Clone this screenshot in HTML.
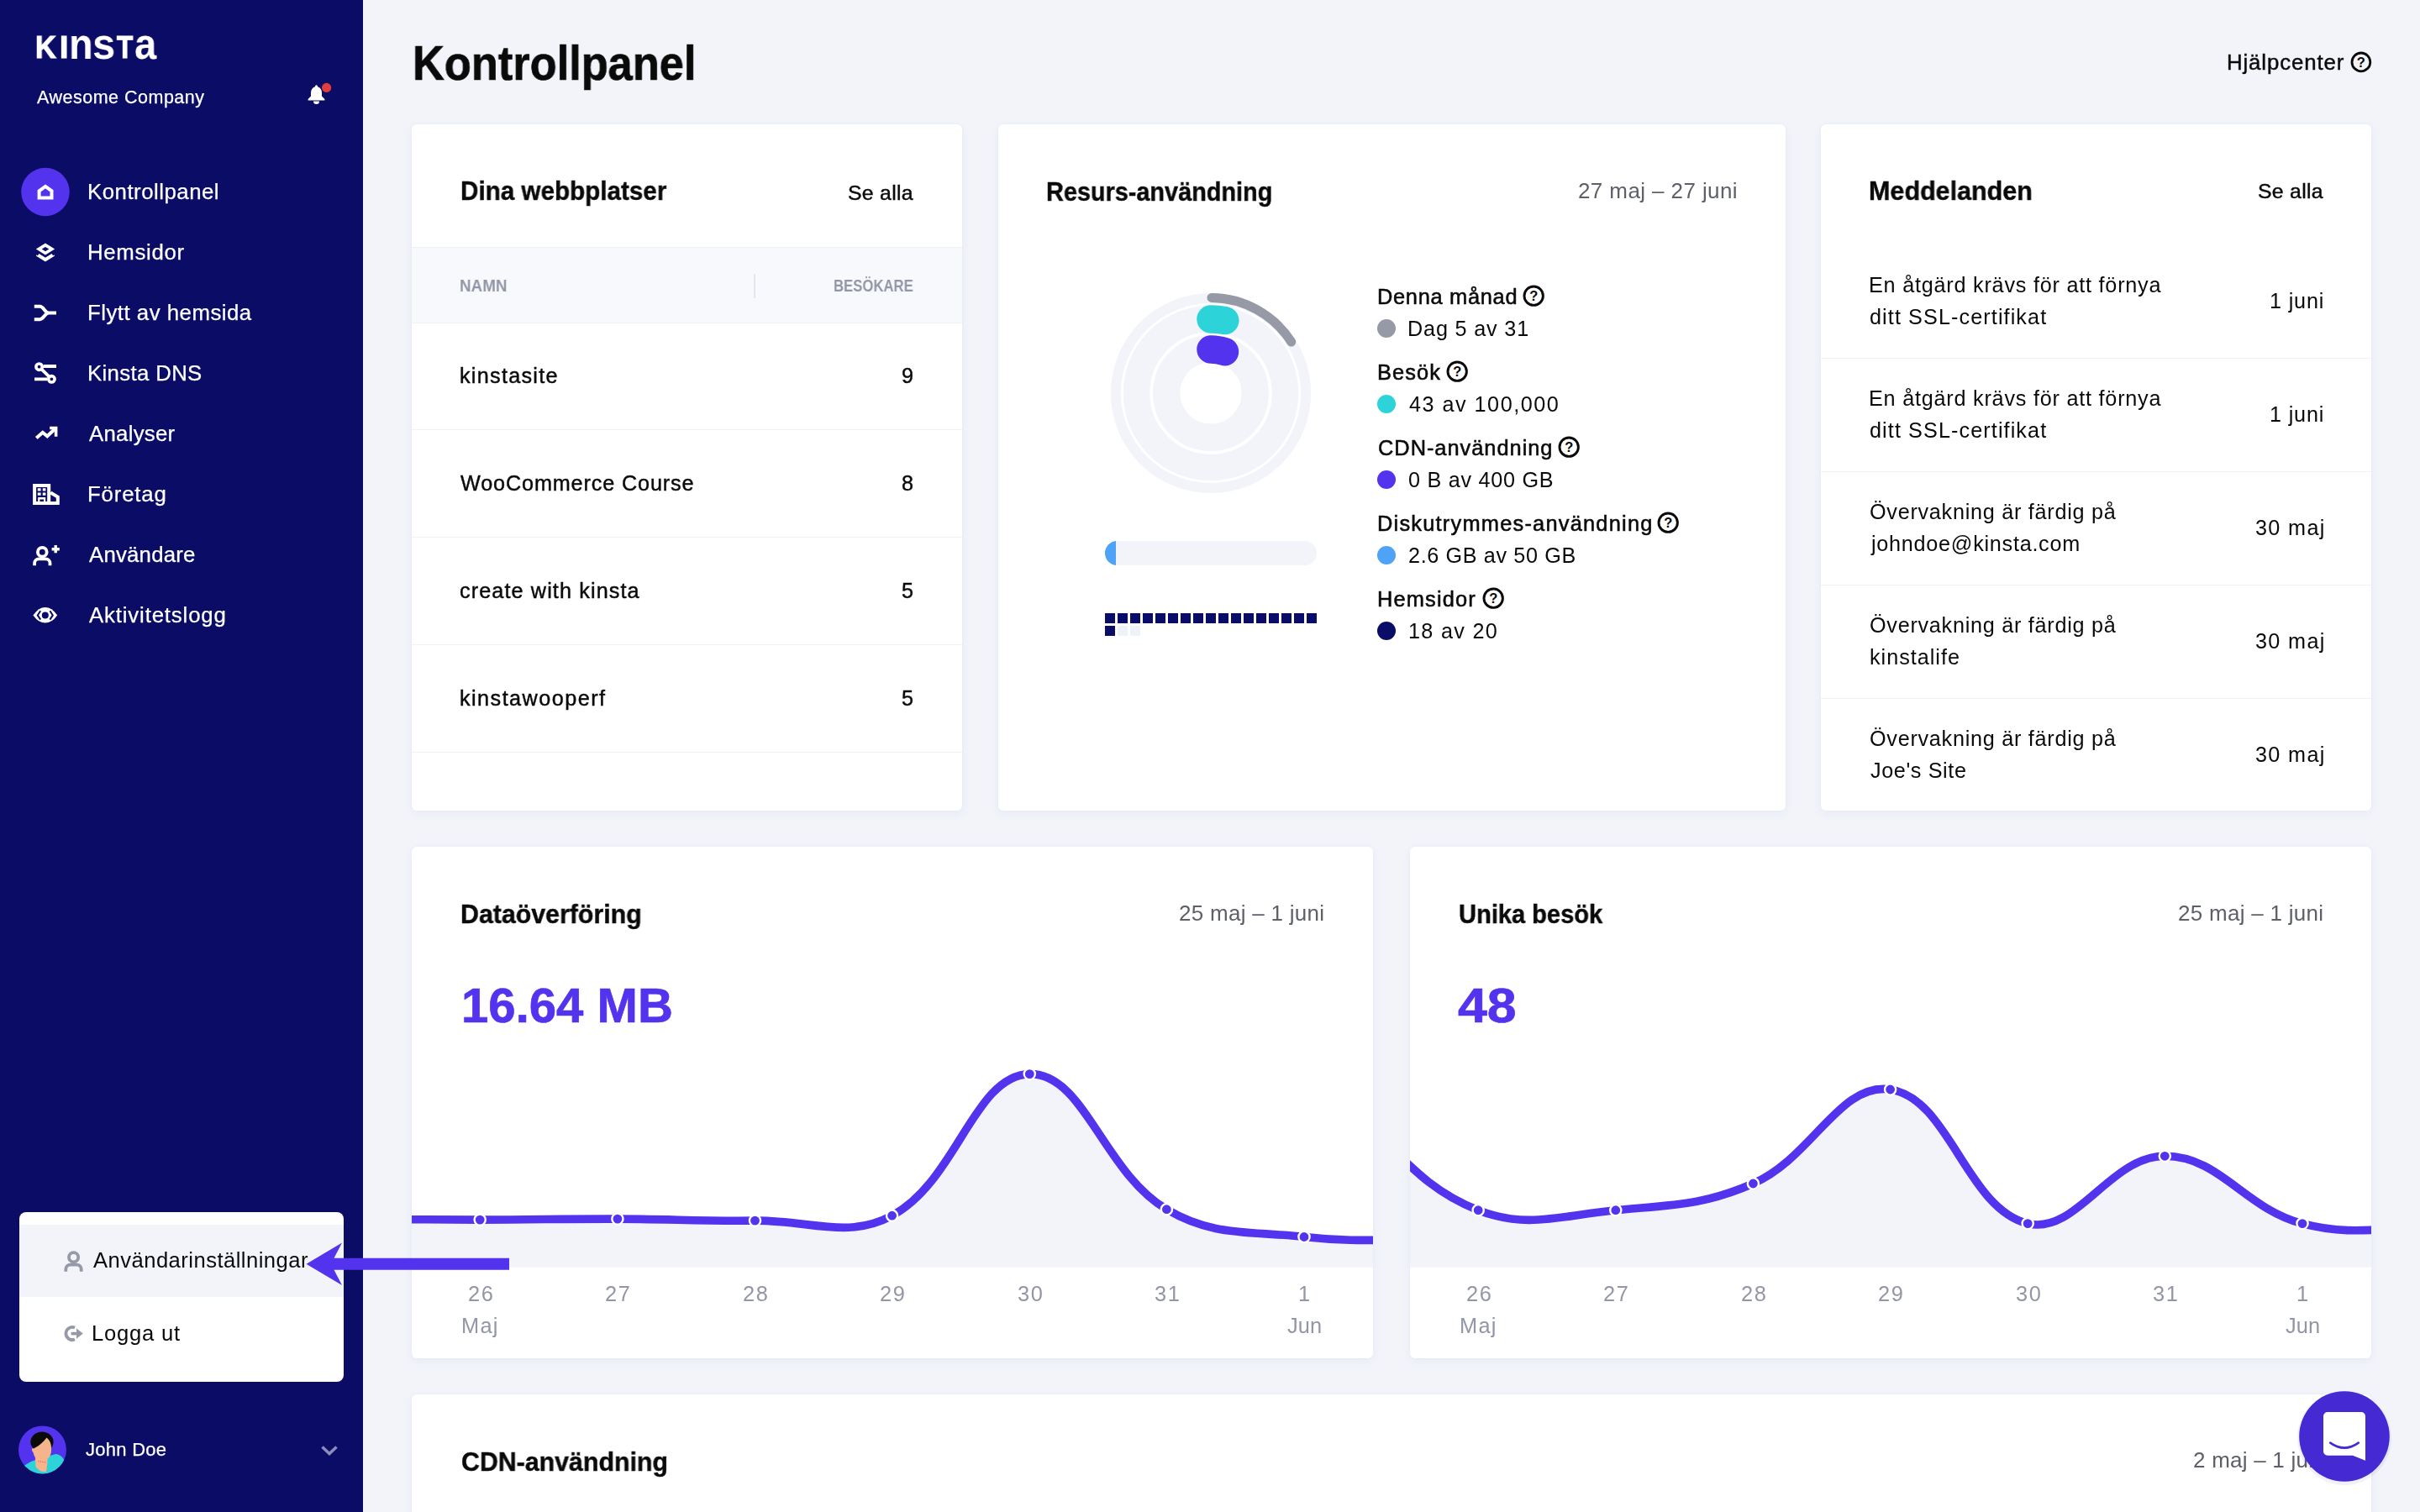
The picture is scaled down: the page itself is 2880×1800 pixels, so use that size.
<!DOCTYPE html>
<html lang="sv">
<head>
<meta charset="utf-8">
<title>Kontrollpanel - MyKinsta</title>
<style>
html,body{margin:0;padding:0;}
body{width:2880px;height:1800px;overflow:hidden;position:relative;background:#f2f4fa;font-family:"Liberation Sans",sans-serif;color:#0a0a0a;}
.t{position:absolute;white-space:nowrap;line-height:1;will-change:transform;}
.card{position:absolute;background:#fff;border-radius:6px;box-shadow:0 3px 12px rgba(40,60,130,0.05),0 0 3px rgba(40,60,130,0.03);overflow:hidden;}
.abs{position:absolute;}
svg{position:absolute;overflow:visible;}
</style>
</head>
<body>
<div class="abs" style="left:0;top:0;width:432px;height:1800px;background:#0a0c66;"></div>
<div class="abs" style="left:0;top:0;width:432px;height:90px;"><span class="t" style="top:38.2px;font-size:37.4px;font-weight:700;color:#ffffff;left:42.04px;transform:scaleX(0.9160);transform-origin:0 0;-webkit-text-stroke:1.2px #fff;">K</span><span class="t" style="top:38.2px;font-size:37.4px;font-weight:700;color:#ffffff;left:70.90px;-webkit-text-stroke:1.2px #fff;">I</span><span class="t" style="top:25.9px;font-size:52px;font-weight:700;color:#ffffff;left:81.66px;transform:scaleX(0.9038);transform-origin:0 0;">n</span><span class="t" style="top:26.3px;font-size:52px;font-weight:700;color:#ffffff;left:110.20px;transform:scaleX(0.9400);transform-origin:0 0;">s</span><span class="t" style="top:38.2px;font-size:37.4px;font-weight:700;color:#ffffff;left:139.05px;transform:scaleX(0.8435);transform-origin:0 0;-webkit-text-stroke:1.2px #fff;">T</span><span class="t" style="top:26.3px;font-size:52px;font-weight:700;color:#ffffff;left:160.06px;transform:scaleX(0.9069);transform-origin:0 0;">a</span></div>
<div class="t" style="top:106.1px;font-size:21.5px;font-weight:400;color:#ffffff;left:44.30px;letter-spacing:0.500px;-webkit-text-stroke:0.25px #fff;">Awesome Company</div>
<div class="t" style="top:215.7px;font-size:25.8px;font-weight:400;color:#ffffff;left:103.80px;letter-spacing:0.500px;-webkit-text-stroke:0.25px #fff;">Kontrollpanel</div>
<div class="t" style="top:287.7px;font-size:25.8px;font-weight:400;color:#ffffff;left:103.80px;letter-spacing:0.686px;-webkit-text-stroke:0.25px #fff;">Hemsidor</div>
<div class="t" style="top:359.7px;font-size:25.8px;font-weight:400;color:#ffffff;left:103.80px;letter-spacing:0.493px;-webkit-text-stroke:0.25px #fff;">Flytt av hemsida</div>
<div class="t" style="top:431.7px;font-size:25.8px;font-weight:400;color:#ffffff;left:103.80px;letter-spacing:0.333px;-webkit-text-stroke:0.25px #fff;">Kinsta DNS</div>
<div class="t" style="top:503.7px;font-size:25.8px;font-weight:400;color:#ffffff;left:105.80px;letter-spacing:0.257px;-webkit-text-stroke:0.25px #fff;">Analyser</div>
<div class="t" style="top:575.7px;font-size:25.8px;font-weight:400;color:#ffffff;left:103.80px;letter-spacing:0.817px;-webkit-text-stroke:0.25px #fff;">Företag</div>
<div class="t" style="top:647.7px;font-size:25.8px;font-weight:400;color:#ffffff;left:105.80px;letter-spacing:0.200px;-webkit-text-stroke:0.25px #fff;">Användare</div>
<div class="t" style="top:719.7px;font-size:25.8px;font-weight:400;color:#ffffff;left:105.80px;letter-spacing:0.838px;-webkit-text-stroke:0.25px #fff;">Aktivitetslogg</div>
<div class="t" style="top:1714.8px;font-size:22px;font-weight:400;color:#ffffff;left:101.60px;letter-spacing:0.271px;-webkit-text-stroke:0.25px #fff;">John Doe</div>
<svg width="432" height="1800" viewBox="0 0 432 1800" style="left:0;top:0" fill="none" stroke="#fff" stroke-width="4"><circle cx="54" cy="228.5" r="28.8" fill="#5333ed" stroke="none"/><path d="M54,221.9 L61.5,227.3 V235.6 H46.6 V227.3 Z" stroke-linejoin="miter"/><path d="M54,289.6 L65.2,296.6 L54,303.6 L42.8,296.6 Z M54,293.9 L49.7,296.6 L54,299.3 L58.3,296.6 Z" fill="#fff" fill-rule="evenodd" stroke="none"/><path d="M43.2,303.2 L54,310 L64.8,303.2 L64.8,304.8 L54,311.6 L43.2,304.8 Z" fill="#fff" stroke="none"/><path d="M45.5,303.4 L54,308.8 L62.5,303.4" stroke-width="3.4" stroke-linecap="butt"/><path d="M40.8,364.8 H47.5 C52,364.8 53.5,372.5 58,372.5 H67 M40.8,380.2 H47.5 C52,380.2 53.5,372.5 58,372.5"/><circle cx="46.6" cy="436.7" r="3.7" stroke-width="3.6"/><circle cx="61.4" cy="451.3" r="3.7" stroke-width="3.6"/><path d="M52,436 H67 M41,451.3 H56 M49.3,439.4 L58.7,448.6" stroke-width="3.8"/><path d="M43.3,521.5 L50.8,514.8 L56.2,519.3 L65,511" stroke-width="4"/><path d="M59.2,509.5 H66.6 V519.7" stroke-width="3.6"/><path d="M41.1,578 H58.2 V599 H41.1 Z M60.2,586.5 L68.8,591.6 V599 H59" stroke-width="4"/><path d="M44.8,581.2 h3.8 v3.2 h-3.8 Z M50.8,581.2 h3.6 v3.2 h-3.6 Z M44.8,586.6 h3.8 v3.2 h-3.8 Z M50.8,586.6 h3.6 v3.2 h-3.6 Z M45.2,592 h9 v6 h-2.2 v-3.6 h-4.6 v3.6 h-2.2 Z" fill="#fff" stroke="none"/><circle cx="50.3" cy="657.2" r="5.4" stroke-width="3.8"/><path d="M41.1,673.2 V670.6 A5.2,5.2 0 0 1 46.3,665.4 H54.3 A5.2,5.2 0 0 1 59.5,670.6 V673.2" stroke-width="3.8"/><path d="M61.6,653.7 H70.8 M66.2,649.1 V658.3" stroke-width="3.4"/><path d="M39.4,732.4 Q46,723 53.8,723 Q61.6,723 68.2,732.4 Q61.6,741.6 53.8,741.6 Q46,741.6 39.4,732.4 Z" fill="#fff" stroke="none"/><circle cx="53.8" cy="732.4" r="4" fill="#0a0c66" stroke="none"/><path d="M48.2,727.2 L44.8,732.4 L48.2,737.6 M59.4,727.2 L62.8,732.4 L59.4,737.6" stroke="#0a0c66" stroke-width="2"/><path d="M376.5,101.2 C377.6,101.2 378,102.4 378.1,103.2 C381.3,104.2 383,107 383,110.2 V114.6 L386.4,118 V119.4 H366.6 V118 L370,114.6 V110.2 C370,107 371.7,104.2 374.9,103.2 C375,102.4 375.4,101.2 376.5,101.2 Z" fill="#fff" stroke="none"/><path d="M373,120.6 H380 A3.5,3.5 0 0 1 373,120.6 Z" fill="#fff" stroke="none"/><circle cx="388.6" cy="104.4" r="5.6" fill="#e03d3d" stroke="none"/><path d="M383.5,1722.5 L392,1730.5 L400.5,1722.5" stroke="#8b8cbd" stroke-width="3.6"/><clipPath id="avc"><circle cx="50.5" cy="1725.9" r="28.5"/></clipPath><g clip-path="url(#avc)" stroke="none"><rect x="20" y="1695" width="62" height="62" fill="#5333ed"/><path d="M27,1746 C34,1741 40,1738 46,1737 L66,1731 C72,1731 76,1736 78,1742 L80,1760 H24 Z" fill="#2cd4d9"/><path d="M41.8,1733 L42.5,1746 C45,1750 50,1753 55,1752 L56.5,1741 L56,1730 Z" fill="#f5b48b"/><ellipse cx="50" cy="1716.6" rx="13.6" ry="12.2" fill="#0a0a0a"/><path d="M40,1724.5 C38,1722.5 37,1726.5 39.5,1729 C41,1736 45,1739 50,1739 C56,1739 60.5,1734.5 61,1727.5 C61.5,1720 60,1715 55.5,1711.5 C52,1716.5 46,1721.5 40,1724.5 Z" fill="#f5b48b"/><path d="M45.5,1739.5 L54.5,1741" stroke="#e03d3d" stroke-width="0.9" stroke-dasharray="1 1.6"/></g></svg>
<div class="abs" style="left:23px;top:1443px;width:386px;height:202px;background:#fff;border-radius:8px;"></div>
<div class="abs" style="left:23px;top:1458px;width:386px;height:86px;background:#f2f4fa;"></div>
<div class="t" style="top:1487.8px;font-size:25.6px;font-weight:400;color:#0a0a0a;left:110.60px;letter-spacing:0.465px;">Användarinställningar</div>
<div class="t" style="top:1575.0px;font-size:25.6px;font-weight:400;color:#0a0a0a;left:108.90px;letter-spacing:0.786px;">Logga ut</div>
<svg width="120" height="140" viewBox="60 1470 120 140" style="left:60px;top:1470px" fill="none" stroke="#9699a8" stroke-width="3.8"><circle cx="87.6" cy="1496.8" r="5.6"/><path d="M78.3,1513.8 V1511 A5.4,5.4 0 0 1 83.7,1505.6 H91.3 A5.4,5.4 0 0 1 96.7,1511 V1513.8"/><path d="M89,1580.6 A7.6,7.6 0 1 0 89,1594.6" stroke-width="3.8"/><path d="M84.6,1587.6 H92" stroke-width="3.6"/><path d="M91,1581.4 L98.8,1587.6 L91,1593.8 Z" fill="#9699a8" stroke="none"/></svg>
<div class="t" style="top:46.7px;font-size:57.2px;font-weight:700;color:#0a0a0a;left:491.33px;transform:scaleX(0.9155);transform-origin:0 0;-webkit-text-stroke:0.7px currentColor;">Kontrollpanel</div>
<div class="t" style="top:62.0px;font-size:25.8px;font-weight:400;color:#0a0a0a;left:2650.30px;letter-spacing:0.880px;-webkit-text-stroke:0.45px currentColor;">Hjälpcenter</div>
<svg width="27.8" height="27.8" viewBox="-13.9 -13.9 27.8 27.8" style="left:2795.8px;top:59.8px"><circle cx="0" cy="0" r="10.9" fill="none" stroke="#0a0a0a" stroke-width="2.8"/><text x="0" y="5.9" text-anchor="middle" font-family="Liberation Sans, sans-serif" font-weight="700" font-size="16.5" fill="#0a0a0a">?</text></svg>
<div class="card" style="left:490px;top:148px;width:655px;height:816.5px;"></div>
<div class="t" style="top:213.3px;font-size:30.7px;font-weight:700;color:#0a0a0a;left:547.56px;transform:scaleX(0.9655);transform-origin:0 0;-webkit-text-stroke:0.4px currentColor;">Dina webbplatser</div>
<div class="t" style="top:218.3px;font-size:24.8px;font-weight:400;color:#0a0a0a;left:1008.60px;letter-spacing:0.283px;-webkit-text-stroke:0.45px currentColor;">Se alla</div>
<div style="position:absolute;left:490px;top:294.4px;width:655px;height:90.4px;background:#f8f9fc;border-top:1px solid #f0f1f6;border-bottom:1px solid #f0f1f6;box-sizing:border-box;"></div>
<div class="t" style="top:330.0px;font-size:20.2px;font-weight:700;color:#9296a6;left:546.74px;transform:scaleX(0.9322);transform-origin:0 0;">NAMN</div>
<div class="t" style="top:330.0px;font-size:20.2px;font-weight:700;color:#9296a6;left:992.22px;transform:scaleX(0.8283);transform-origin:0 0;">BESÖKARE</div>
<div style="position:absolute;left:897px;top:325.8px;width:1.8px;height:28.8px;background:#e4e6ee;"></div>
<div class="t" style="top:434.9px;font-size:25.2px;font-weight:400;color:#0a0a0a;left:547.30px;letter-spacing:1.278px;-webkit-text-stroke:0.45px currentColor;">kinstasite</div>
<div class="t" style="top:434.9px;font-size:25.2px;font-weight:400;color:#0a0a0a;left:1072.90px;-webkit-text-stroke:0.45px currentColor;">9</div>
<div style="position:absolute;left:490px;top:510.8px;width:655px;height:1.5px;background:#f1f2f7;"></div>
<div class="t" style="top:562.9px;font-size:25.2px;font-weight:400;color:#0a0a0a;left:548.30px;letter-spacing:0.871px;-webkit-text-stroke:0.45px currentColor;">WooCommerce Course</div>
<div class="t" style="top:562.9px;font-size:25.2px;font-weight:400;color:#0a0a0a;left:1072.90px;-webkit-text-stroke:0.45px currentColor;">8</div>
<div style="position:absolute;left:490px;top:638.8px;width:655px;height:1.5px;background:#f1f2f7;"></div>
<div class="t" style="top:690.9px;font-size:25.2px;font-weight:400;color:#0a0a0a;left:547.30px;letter-spacing:1.118px;-webkit-text-stroke:0.45px currentColor;">create with kinsta</div>
<div class="t" style="top:690.9px;font-size:25.2px;font-weight:400;color:#0a0a0a;left:1072.90px;-webkit-text-stroke:0.45px currentColor;">5</div>
<div style="position:absolute;left:490px;top:766.8px;width:655px;height:1.5px;background:#f1f2f7;"></div>
<div class="t" style="top:818.9px;font-size:25.2px;font-weight:400;color:#0a0a0a;left:547.30px;letter-spacing:1.467px;-webkit-text-stroke:0.45px currentColor;">kinstawooperf</div>
<div class="t" style="top:818.9px;font-size:25.2px;font-weight:400;color:#0a0a0a;left:1072.90px;-webkit-text-stroke:0.45px currentColor;">5</div>
<div style="position:absolute;left:490px;top:894.8px;width:655px;height:1.5px;background:#f1f2f7;"></div>
<div class="card" style="left:1188px;top:148px;width:936.5px;height:816.5px;"></div>
<div class="t" style="top:213.7px;font-size:30.7px;font-weight:700;color:#0a0a0a;left:1245.10px;transform:scaleX(0.9399);transform-origin:0 0;-webkit-text-stroke:0.4px currentColor;">Resurs-användning</div>
<div class="t" style="top:213.5px;font-size:26px;font-weight:400;color:#5d5f69;left:1877.70px;letter-spacing:0.400px;">27 maj – 27 juni</div>
<svg width="300" height="300" viewBox="1291.2 318.1 300 300" style="left:1291.2px;top:318.1px" fill="none"><circle cx="1441.2" cy="468.1" r="113.1" stroke="#f2f4fa" stroke-width="12"/><circle cx="1441.2" cy="468.1" r="88.5" stroke="#f2f4fa" stroke-width="31.6"/><circle cx="1441.2" cy="468.1" r="52.8" stroke="#f2f4fa" stroke-width="32.4"/><path d="M1442.19,354.60 A113.5,113.5 0 0 1 1536.92,407.12" stroke="#9699a6" stroke-width="11" stroke-linecap="round"/><path d="M1441.20,380.10 A88,88 0 0 1 1457.99,381.72" stroke="#2cd4d9" stroke-width="33.5" stroke-linecap="round"/><path d="M1441.20,416.10 A52,52 0 0 1 1457.70,418.79" stroke="#5333ed" stroke-width="33.5" stroke-linecap="round"/></svg>
<div style="position:absolute;left:1315px;top:644px;width:252px;height:29px;background:#f2f4fa;border-radius:14.5px;overflow:hidden;"><div style="width:13px;height:29px;background:#4ea3f7;"></div></div>
<div style="position:absolute;left:1315px;top:730px;width:260px;height:30px;"><div style="position:absolute;left:0.00px;top:0.0px;width:11.6px;height:11.6px;background:#0a0d67;"></div><div style="position:absolute;left:15.03px;top:0.0px;width:11.6px;height:11.6px;background:#0a0d67;"></div><div style="position:absolute;left:30.06px;top:0.0px;width:11.6px;height:11.6px;background:#0a0d67;"></div><div style="position:absolute;left:45.09px;top:0.0px;width:11.6px;height:11.6px;background:#0a0d67;"></div><div style="position:absolute;left:60.12px;top:0.0px;width:11.6px;height:11.6px;background:#0a0d67;"></div><div style="position:absolute;left:75.15px;top:0.0px;width:11.6px;height:11.6px;background:#0a0d67;"></div><div style="position:absolute;left:90.18px;top:0.0px;width:11.6px;height:11.6px;background:#0a0d67;"></div><div style="position:absolute;left:105.21px;top:0.0px;width:11.6px;height:11.6px;background:#0a0d67;"></div><div style="position:absolute;left:120.24px;top:0.0px;width:11.6px;height:11.6px;background:#0a0d67;"></div><div style="position:absolute;left:135.27px;top:0.0px;width:11.6px;height:11.6px;background:#0a0d67;"></div><div style="position:absolute;left:150.30px;top:0.0px;width:11.6px;height:11.6px;background:#0a0d67;"></div><div style="position:absolute;left:165.33px;top:0.0px;width:11.6px;height:11.6px;background:#0a0d67;"></div><div style="position:absolute;left:180.36px;top:0.0px;width:11.6px;height:11.6px;background:#0a0d67;"></div><div style="position:absolute;left:195.39px;top:0.0px;width:11.6px;height:11.6px;background:#0a0d67;"></div><div style="position:absolute;left:210.42px;top:0.0px;width:11.6px;height:11.6px;background:#0a0d67;"></div><div style="position:absolute;left:225.45px;top:0.0px;width:11.6px;height:11.6px;background:#0a0d67;"></div><div style="position:absolute;left:240.48px;top:0.0px;width:11.6px;height:11.6px;background:#0a0d67;"></div><div style="position:absolute;left:0.00px;top:15.1px;width:11.6px;height:11.6px;background:#0a0d67;"></div><div style="position:absolute;left:15.03px;top:15.1px;width:11.6px;height:11.6px;background:#f0f2f9;"></div><div style="position:absolute;left:30.06px;top:15.1px;width:11.6px;height:11.6px;background:#f0f2f9;"></div></div>
<div class="t" style="top:341.2px;font-size:25.4px;font-weight:400;color:#0a0a0a;left:1638.80px;letter-spacing:0.700px;-webkit-text-stroke:0.55px currentColor;">Denna månad</div>
<svg width="28.4" height="28.4" viewBox="-14.2 -14.2 28.4 28.4" style="left:1810.5px;top:338.2px"><circle cx="0" cy="0" r="11.2" fill="none" stroke="#0a0a0a" stroke-width="2.9"/><text x="0" y="5.9" text-anchor="middle" font-family="Liberation Sans, sans-serif" font-weight="700" font-size="16.5" fill="#0a0a0a">?</text></svg>
<div style="position:absolute;left:1638.8px;top:379.6px;width:22.4px;height:22.4px;border-radius:50%;background:#9699a6;"></div>
<div class="t" style="top:378.7px;font-size:25.2px;font-weight:400;color:#0a0a0a;left:1674.70px;letter-spacing:0.840px;">Dag 5 av 31</div>
<div class="t" style="top:431.2px;font-size:25.4px;font-weight:400;color:#0a0a0a;left:1638.80px;letter-spacing:1.100px;-webkit-text-stroke:0.55px currentColor;">Besök</div>
<svg width="28.4" height="28.4" viewBox="-14.2 -14.2 28.4 28.4" style="left:1719.9px;top:428.2px"><circle cx="0" cy="0" r="11.2" fill="none" stroke="#0a0a0a" stroke-width="2.9"/><text x="0" y="5.9" text-anchor="middle" font-family="Liberation Sans, sans-serif" font-weight="700" font-size="16.5" fill="#0a0a0a">?</text></svg>
<div style="position:absolute;left:1638.8px;top:469.6px;width:22.4px;height:22.4px;border-radius:50%;background:#2cd4d9;"></div>
<div class="t" style="top:468.7px;font-size:25.2px;font-weight:400;color:#0a0a0a;left:1676.70px;letter-spacing:1.500px;">43 av 100,000</div>
<div class="t" style="top:521.2px;font-size:25.4px;font-weight:400;color:#0a0a0a;left:1639.80px;letter-spacing:0.977px;-webkit-text-stroke:0.55px currentColor;">CDN-användning</div>
<svg width="28.4" height="28.4" viewBox="-14.2 -14.2 28.4 28.4" style="left:1853.2px;top:518.2px"><circle cx="0" cy="0" r="11.2" fill="none" stroke="#0a0a0a" stroke-width="2.9"/><text x="0" y="5.9" text-anchor="middle" font-family="Liberation Sans, sans-serif" font-weight="700" font-size="16.5" fill="#0a0a0a">?</text></svg>
<div style="position:absolute;left:1638.8px;top:559.6px;width:22.4px;height:22.4px;border-radius:50%;background:#5333ed;"></div>
<div class="t" style="top:558.7px;font-size:25.2px;font-weight:400;color:#0a0a0a;left:1675.70px;letter-spacing:0.733px;">0 B av 400 GB</div>
<div class="t" style="top:611.2px;font-size:25.4px;font-weight:400;color:#0a0a0a;left:1638.80px;letter-spacing:1.218px;-webkit-text-stroke:0.55px currentColor;">Diskutrymmes-användning</div>
<svg width="28.4" height="28.4" viewBox="-14.2 -14.2 28.4 28.4" style="left:1971.3px;top:608.2px"><circle cx="0" cy="0" r="11.2" fill="none" stroke="#0a0a0a" stroke-width="2.9"/><text x="0" y="5.9" text-anchor="middle" font-family="Liberation Sans, sans-serif" font-weight="700" font-size="16.5" fill="#0a0a0a">?</text></svg>
<div style="position:absolute;left:1638.8px;top:649.6px;width:22.4px;height:22.4px;border-radius:50%;background:#4ea3f7;"></div>
<div class="t" style="top:648.7px;font-size:25.2px;font-weight:400;color:#0a0a0a;left:1675.70px;letter-spacing:0.629px;">2.6 GB av 50 GB</div>
<div class="t" style="top:701.2px;font-size:25.4px;font-weight:400;color:#0a0a0a;left:1638.80px;letter-spacing:1.143px;-webkit-text-stroke:0.55px currentColor;">Hemsidor</div>
<svg width="28.4" height="28.4" viewBox="-14.2 -14.2 28.4 28.4" style="left:1762.5px;top:698.2px"><circle cx="0" cy="0" r="11.2" fill="none" stroke="#0a0a0a" stroke-width="2.9"/><text x="0" y="5.9" text-anchor="middle" font-family="Liberation Sans, sans-serif" font-weight="700" font-size="16.5" fill="#0a0a0a">?</text></svg>
<div style="position:absolute;left:1638.8px;top:739.6px;width:22.4px;height:22.4px;border-radius:50%;background:#0a0d67;"></div>
<div class="t" style="top:738.7px;font-size:25.2px;font-weight:400;color:#0a0a0a;left:1676.10px;letter-spacing:1.314px;">18 av 20</div>
<div class="card" style="left:2167px;top:148px;width:655px;height:816.5px;"></div>
<div class="t" style="top:213.3px;font-size:30.7px;font-weight:700;color:#0a0a0a;left:2224.11px;transform:scaleX(0.9938);transform-origin:0 0;-webkit-text-stroke:0.4px currentColor;">Meddelanden</div>
<div class="t" style="top:216.1px;font-size:24.8px;font-weight:400;color:#0a0a0a;left:2686.60px;letter-spacing:0.283px;-webkit-text-stroke:0.45px currentColor;">Se alla</div>
<div class="t" style="top:326.8px;font-size:25.2px;font-weight:400;color:#0a0a0a;left:2223.80px;letter-spacing:0.783px;">En åtgärd krävs för att förnya</div>
<div class="t" style="top:364.7px;font-size:25.2px;font-weight:400;color:#0a0a0a;left:2224.80px;letter-spacing:1.100px;">ditt SSL-certifikat</div>
<div class="t" style="top:346.1px;font-size:25.2px;font-weight:400;color:#0a0a0a;left:2701.20px;letter-spacing:0.840px;">1 juni</div>
<div class="t" style="top:461.8px;font-size:25.2px;font-weight:400;color:#0a0a0a;left:2223.80px;letter-spacing:0.783px;">En åtgärd krävs för att förnya</div>
<div class="t" style="top:499.7px;font-size:25.2px;font-weight:400;color:#0a0a0a;left:2224.80px;letter-spacing:1.100px;">ditt SSL-certifikat</div>
<div class="t" style="top:481.1px;font-size:25.2px;font-weight:400;color:#0a0a0a;left:2701.20px;letter-spacing:0.840px;">1 juni</div>
<div style="position:absolute;left:2167px;top:425.7px;width:655px;height:1.5px;background:#f1f2f7;"></div>
<div class="t" style="top:596.8px;font-size:25.2px;font-weight:400;color:#0a0a0a;left:2224.80px;letter-spacing:0.739px;">Övervakning är färdig på</div>
<div class="t" style="top:634.7px;font-size:25.2px;font-weight:400;color:#0a0a0a;left:2226.80px;letter-spacing:0.741px;">johndoe@kinsta.com</div>
<div class="t" style="top:616.1px;font-size:25.2px;font-weight:400;color:#0a0a0a;left:2683.60px;letter-spacing:1.360px;">30 maj</div>
<div style="position:absolute;left:2167px;top:560.7px;width:655px;height:1.5px;background:#f1f2f7;"></div>
<div class="t" style="top:731.8px;font-size:25.2px;font-weight:400;color:#0a0a0a;left:2224.80px;letter-spacing:0.739px;">Övervakning är färdig på</div>
<div class="t" style="top:769.7px;font-size:25.2px;font-weight:400;color:#0a0a0a;left:2224.80px;letter-spacing:0.989px;">kinstalife</div>
<div class="t" style="top:751.1px;font-size:25.2px;font-weight:400;color:#0a0a0a;left:2683.60px;letter-spacing:1.360px;">30 maj</div>
<div style="position:absolute;left:2167px;top:695.7px;width:655px;height:1.5px;background:#f1f2f7;"></div>
<div class="t" style="top:866.8px;font-size:25.2px;font-weight:400;color:#0a0a0a;left:2224.80px;letter-spacing:0.739px;">Övervakning är färdig på</div>
<div class="t" style="top:904.7px;font-size:25.2px;font-weight:400;color:#0a0a0a;left:2225.80px;letter-spacing:0.611px;">Joe's Site</div>
<div class="t" style="top:886.1px;font-size:25.2px;font-weight:400;color:#0a0a0a;left:2683.60px;letter-spacing:1.360px;">30 maj</div>
<div style="position:absolute;left:2167px;top:830.7px;width:655px;height:1.5px;background:#f1f2f7;"></div>
<div class="card" style="left:490px;top:1008px;width:1143.8px;height:608.6px;"><svg width="1143.8" height="608.6" viewBox="490 1008 1143.8 608.6" style="left:0;top:0"><path d="M407.7,1451.0 C473.1,1451.4 505.8,1452.1 571.2,1452.1 C636.7,1452.1 669.4,1450.9 734.9,1451.1 C800.3,1451.3 833.1,1453.9 898.5,1453.1 C963.8,1452.3 1008.0,1475.8 1061.6,1447.2 C1138.7,1406.0 1159.1,1280.1 1225.3,1278.6 C1289.9,1277.1 1312.8,1394.8 1388.4,1439.7 C1443.4,1472.4 1485.9,1465.2 1552.0,1472.5 C1616.8,1479.7 1650.1,1474.6 1715.5,1476.0 L1715.5,1508.7 L407.7,1508.7 Z" fill="#f2f4fa"/><path d="M407.7,1451.0 C473.1,1451.4 505.8,1452.1 571.2,1452.1 C636.7,1452.1 669.4,1450.9 734.9,1451.1 C800.3,1451.3 833.1,1453.9 898.5,1453.1 C963.8,1452.3 1008.0,1475.8 1061.6,1447.2 C1138.7,1406.0 1159.1,1280.1 1225.3,1278.6 C1289.9,1277.1 1312.8,1394.8 1388.4,1439.7 C1443.4,1472.4 1485.9,1465.2 1552.0,1472.5 C1616.8,1479.7 1650.1,1474.6 1715.5,1476.0" fill="none" stroke="#5333ed" stroke-width="9.6" stroke-linejoin="round"/><circle cx="571.2" cy="1452.1" r="6.6" fill="#5333ed" stroke="#fff" stroke-width="2.4"/><circle cx="734.9" cy="1451.1" r="6.6" fill="#5333ed" stroke="#fff" stroke-width="2.4"/><circle cx="898.5" cy="1453.1" r="6.6" fill="#5333ed" stroke="#fff" stroke-width="2.4"/><circle cx="1061.6" cy="1447.2" r="6.6" fill="#5333ed" stroke="#fff" stroke-width="2.4"/><circle cx="1225.3" cy="1278.6" r="6.6" fill="#5333ed" stroke="#fff" stroke-width="2.4"/><circle cx="1388.4" cy="1439.7" r="6.6" fill="#5333ed" stroke="#fff" stroke-width="2.4"/><circle cx="1552.0" cy="1472.5" r="6.6" fill="#5333ed" stroke="#fff" stroke-width="2.4"/></svg></div>
<div class="t" style="top:1074.2px;font-size:30.7px;font-weight:700;color:#0a0a0a;left:547.62px;transform:scaleX(0.9884);transform-origin:0 0;-webkit-text-stroke:0.4px currentColor;">Dataöverföring</div>
<div class="t" style="top:1074.1px;font-size:26px;font-weight:400;color:#5d5f69;left:1403.40px;letter-spacing:0.286px;">25 maj – 1 juni</div>
<div class="t" style="top:1167.6px;font-size:58px;font-weight:700;color:#5333ed;left:549.09px;transform:scaleX(1.0020);transform-origin:0 0;-webkit-text-stroke:0.7px currentColor;">16.64 MB</div>
<div class="t" style="top:1528.3px;font-size:25.4px;font-weight:400;color:#9296a6;left:556.70px;letter-spacing:1.600px;">26</div>
<div class="t" style="top:1528.3px;font-size:25.4px;font-weight:400;color:#9296a6;left:720.40px;letter-spacing:1.600px;">27</div>
<div class="t" style="top:1528.3px;font-size:25.4px;font-weight:400;color:#9296a6;left:884.00px;letter-spacing:1.600px;">28</div>
<div class="t" style="top:1528.3px;font-size:25.4px;font-weight:400;color:#9296a6;left:1047.10px;letter-spacing:1.600px;">29</div>
<div class="t" style="top:1528.3px;font-size:25.4px;font-weight:400;color:#9296a6;left:1210.80px;letter-spacing:1.600px;">30</div>
<div class="t" style="top:1528.3px;font-size:25.4px;font-weight:400;color:#9296a6;left:1373.90px;letter-spacing:1.600px;">31</div>
<div class="t" style="top:1528.3px;font-size:25.4px;font-weight:400;color:#9296a6;left:1544.80px;">1</div>
<div class="t" style="top:1565.6px;font-size:25.4px;font-weight:400;color:#9296a6;left:549.20px;letter-spacing:1.300px;">Maj</div>
<div class="t" style="top:1565.6px;font-size:25.4px;font-weight:400;color:#9296a6;left:1532.20px;letter-spacing:0.100px;">Jun</div>
<div class="card" style="left:1678px;top:1008px;width:1144px;height:608.6px;"><svg width="1144" height="608.6" viewBox="1678 1008 1144 608.6" style="left:0;top:0"><path d="M1595.7,1312.0 C1661.1,1363.5 1686.0,1411.9 1759.2,1440.7 C1816.8,1463.4 1858.0,1447.0 1922.8,1440.7 C1988.8,1434.3 2026.6,1435.3 2086.4,1409.0 C2157.4,1377.8 2188.9,1288.2 2249.6,1297.0 C2319.7,1307.2 2340.4,1438.9 2413.2,1456.6 C2471.1,1470.7 2511.0,1376.3 2576.3,1376.3 C2641.8,1376.3 2671.0,1438.5 2740.0,1456.6 C2801.9,1472.8 2838.1,1459.8 2903.5,1462.0 L2903.5,1508.7 L1595.7,1508.7 Z" fill="#f2f4fa"/><path d="M1595.7,1312.0 C1661.1,1363.5 1686.0,1411.9 1759.2,1440.7 C1816.8,1463.4 1858.0,1447.0 1922.8,1440.7 C1988.8,1434.3 2026.6,1435.3 2086.4,1409.0 C2157.4,1377.8 2188.9,1288.2 2249.6,1297.0 C2319.7,1307.2 2340.4,1438.9 2413.2,1456.6 C2471.1,1470.7 2511.0,1376.3 2576.3,1376.3 C2641.8,1376.3 2671.0,1438.5 2740.0,1456.6 C2801.9,1472.8 2838.1,1459.8 2903.5,1462.0" fill="none" stroke="#5333ed" stroke-width="9.6" stroke-linejoin="round"/><circle cx="1759.2" cy="1440.7" r="6.6" fill="#5333ed" stroke="#fff" stroke-width="2.4"/><circle cx="1922.8" cy="1440.7" r="6.6" fill="#5333ed" stroke="#fff" stroke-width="2.4"/><circle cx="2086.4" cy="1409.0" r="6.6" fill="#5333ed" stroke="#fff" stroke-width="2.4"/><circle cx="2249.6" cy="1297.0" r="6.6" fill="#5333ed" stroke="#fff" stroke-width="2.4"/><circle cx="2413.2" cy="1456.6" r="6.6" fill="#5333ed" stroke="#fff" stroke-width="2.4"/><circle cx="2576.3" cy="1376.3" r="6.6" fill="#5333ed" stroke="#fff" stroke-width="2.4"/><circle cx="2740.0" cy="1456.6" r="6.6" fill="#5333ed" stroke="#fff" stroke-width="2.4"/></svg></div>
<div class="t" style="top:1074.2px;font-size:30.7px;font-weight:700;color:#0a0a0a;left:1735.69px;transform:scaleX(0.9469);transform-origin:0 0;-webkit-text-stroke:0.4px currentColor;">Unika besök</div>
<div class="t" style="top:1074.1px;font-size:26px;font-weight:400;color:#5d5f69;left:2591.60px;letter-spacing:0.286px;">25 maj – 1 juni</div>
<div class="t" style="top:1167.6px;font-size:58px;font-weight:700;color:#5333ed;left:1735.24px;transform:scaleX(1.0806);transform-origin:0 0;-webkit-text-stroke:0.7px currentColor;">48</div>
<div class="t" style="top:1528.3px;font-size:25.4px;font-weight:400;color:#9296a6;left:1744.70px;letter-spacing:1.600px;">26</div>
<div class="t" style="top:1528.3px;font-size:25.4px;font-weight:400;color:#9296a6;left:1908.30px;letter-spacing:1.600px;">27</div>
<div class="t" style="top:1528.3px;font-size:25.4px;font-weight:400;color:#9296a6;left:2071.90px;letter-spacing:1.600px;">28</div>
<div class="t" style="top:1528.3px;font-size:25.4px;font-weight:400;color:#9296a6;left:2235.10px;letter-spacing:1.600px;">29</div>
<div class="t" style="top:1528.3px;font-size:25.4px;font-weight:400;color:#9296a6;left:2398.70px;letter-spacing:1.600px;">30</div>
<div class="t" style="top:1528.3px;font-size:25.4px;font-weight:400;color:#9296a6;left:2561.80px;letter-spacing:1.600px;">31</div>
<div class="t" style="top:1528.3px;font-size:25.4px;font-weight:400;color:#9296a6;left:2732.80px;">1</div>
<div class="t" style="top:1565.6px;font-size:25.4px;font-weight:400;color:#9296a6;left:1737.20px;letter-spacing:1.300px;">Maj</div>
<div class="t" style="top:1565.6px;font-size:25.4px;font-weight:400;color:#9296a6;left:2720.20px;letter-spacing:0.100px;">Jun</div>
<div class="card" style="left:490px;top:1660px;width:2332px;height:200px;"></div>
<div class="t" style="top:1725.5px;font-size:30.7px;font-weight:700;color:#0a0a0a;left:548.51px;transform:scaleX(0.9878);transform-origin:0 0;-webkit-text-stroke:0.4px currentColor;">CDN-användning</div>
<div class="t" style="top:1724.7px;font-size:26px;font-weight:400;color:#5d5f69;left:2609.80px;letter-spacing:0.231px;">2 maj – 1 juni</div>
<svg width="140" height="140" viewBox="2720 1640 140 140" style="left:2720px;top:1640px"><circle cx="2790" cy="1712" r="56" fill="rgba(60,40,200,0.07)"/><circle cx="2790" cy="1710" r="53.8" fill="#4529d2"/><path d="M2770,1681 H2810 A5,5 0 0 1 2815,1686 V1738.8 L2800,1732.8 H2770 A5,5 0 0 1 2765,1727.8 V1686 A5,5 0 0 1 2770,1681 Z" fill="#fff"/><path d="M2773.2,1717.6 Q2790,1729.6 2806.8,1717.6" fill="none" stroke="#4529d2" stroke-width="2.6" stroke-linecap="round"/></svg>
<svg width="260" height="70" viewBox="360 1470 260 70" style="left:360px;top:1470px"><path d="M364.5,1504.8 L407,1479.6 L397.5,1497.8 H606 V1511.8 H397.5 L407,1530 Z" fill="#5333ed"/></svg>
</body>
</html>
